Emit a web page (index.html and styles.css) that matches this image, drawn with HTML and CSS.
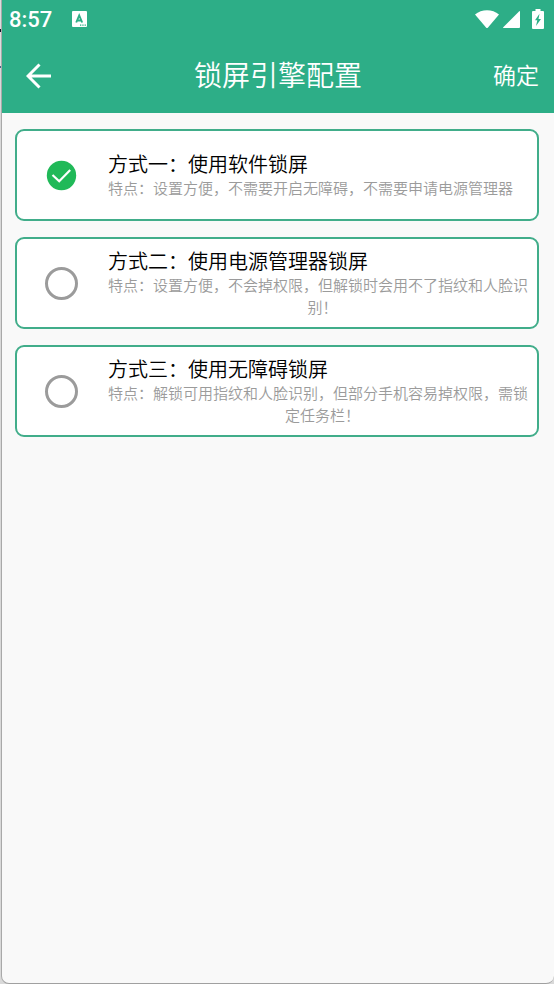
FILE: index.html
```html
<!DOCTYPE html>
<html lang="zh-CN">
<head>
<meta charset="utf-8">
<meta name="viewport" content="width=device-width, initial-scale=1">
<title>锁屏引擎配置</title>
<link rel="stylesheet" href="styles.css">
</head>
<body>
<div class="screen">
  <header class="top">
    <div class="status">
      <span class="clock">8:57</span>
      <svg class="notice" viewBox="0 0 15 16" aria-hidden="true">
        <rect width="15" height="16" rx="1" fill="#fff"/>
        <path d="M4.200 11.500 7.200 4.500l3 7M5.200 9.500h4" fill="none" stroke="#2dae87" stroke-width="1.900"/>
        <path d="M8 14.200h1.300M10.300 14.200h1.300M12.600 14.200h1.300" stroke="#2dae87" stroke-width="1.200"/>
      </svg>
      <span class="signals">
        <svg class="wifi" viewBox="0 0 24 18" aria-hidden="true"><path d="M0 4.500C6.500-1.200 17.500-1.200 24 4.500L13 17.500q-1 1-2 0z" fill="#fff"/></svg>
        <svg class="cell" viewBox="0 0 17 17" aria-hidden="true"><path d="M16 .5q1-1 1 .5v15q0 1-1 1H1q-1.500 0-.5-1z" fill="#fff"/></svg>
        <svg class="battery" viewBox="0 0 12 20" aria-hidden="true"><path d="M3.500 0h5v2H11q1 0 1 1v16q0 1-1 1H1q-1 0-1-1V3q0-1 1-1h2.500z" fill="#fff"/><path d="M7.500 4.800 3 11.200h2.300L4 17l5-7H6.500z" fill="#2dae87"/></svg>
      </span>
    </div>
    <nav class="bar">
      <button class="back" type="button" aria-label="返回">
        <svg viewBox="0 0 26 26" aria-hidden="true"><path d="M25 13H2M13.500 1.500 2 13l11.500 11.500" fill="none" stroke="#fff" stroke-width="3"/></svg>
      </button>
      <h1 class="title">锁屏引擎配置</h1>
      <button class="confirm" type="button">确定</button>
    </nav>
  </header>
  <main class="options">
    <label class="card">
      <input class="radio" type="radio" name="engine" checked>
      <svg class="tick" viewBox="0 0 33 33" aria-hidden="true"><circle cx="16.500" cy="16.500" r="14.700" fill="#20b958"/><path d="M7.500 16l6.700 6.200 11-11.200" fill="none" stroke="#fff" stroke-width="2.200"/></svg>
      <span class="text"><span class="name">方式一：使用软件锁屏</span><span class="desc">特点：设置方便，不需要开启无障碍，不需要申请电源管理器</span></span>
    </label>
    <label class="card">
      <input class="radio" type="radio" name="engine">
      <svg class="tick" viewBox="0 0 33 33" aria-hidden="true"><circle cx="16.500" cy="16.500" r="14.700" fill="#20b958"/><path d="M7.500 16l6.700 6.200 11-11.200" fill="none" stroke="#fff" stroke-width="2.200"/></svg>
      <span class="text"><span class="name">方式二：使用电源管理器锁屏</span><span class="desc">特点：设置方便，不会掉权限，但解锁时会用不了指纹和人脸识别！</span></span>
    </label>
    <label class="card">
      <input class="radio" type="radio" name="engine">
      <svg class="tick" viewBox="0 0 33 33" aria-hidden="true"><circle cx="16.500" cy="16.500" r="14.700" fill="#20b958"/><path d="M7.500 16l6.700 6.200 11-11.200" fill="none" stroke="#fff" stroke-width="2.200"/></svg>
      <span class="text"><span class="name">方式三：使用无障碍锁屏</span><span class="desc">特点：解锁可用指纹和人脸识别，但部分手机容易掉权限，需锁定任务栏！</span></span>
    </label>
  </main>
</div>
</body>
</html>
```
FILE: styles.css
```css
* { box-sizing: border-box; }

body {
  margin: 0;
  padding-left: 1px;
  background: linear-gradient(#ddd 29px, #112 29px, #112 32px, #ddd 32px, #ddd 66px, #468 66px, #468 68px, #d9d9d9 68px);
  font-family: "Noto Sans CJK SC", sans-serif;
  font-weight: 350;
}

.screen {
  min-height: 100vh;
  border-left: 1px solid #a9a9a9;
  border-bottom: 1px solid #a0a0a0;
  border-radius: 0 0 8px 8px;
  background: #f9f9f9;
}

.top {
  background: #2dae87;
  color: #fff;
}

.status {
  display: flex;
  align-items: center;
  height: 38px;
  padding: 0 10px 0 7px;
}

.clock {
  padding-top: 2px;
  font: 500 22px/36px Roboto, sans-serif;
}

.notice {
  width: 15px;
  height: 16px;
  margin-left: 20px;
}

.signals {
  display: flex;
  align-items: center;
  gap: 4px;
  margin-left: auto;
}

.wifi { width: 24px; height: 18px; }
.cell { width: 17px; height: 17px; }
.battery { width: 12px; height: 20px; margin-left: 8px; }

.bar {
  display: grid;
  grid-template-columns: 1fr auto 1fr;
  align-items: center;
  height: 75px;
  padding: 0 15px;
}

.back,
.confirm {
  padding: 0;
  border: 0;
  background: none;
  color: inherit;
  font: inherit;
}

.back {
  justify-self: start;
  height: 26px;
  margin-left: 9px;
}

.back svg {
  display: block;
  width: 26px;
  height: 26px;
}

.title {
  margin: 0;
  padding-bottom: 3px;
  font-size: 28px;
  font-weight: inherit;
  line-height: 40px;
}

.confirm {
  justify-self: end;
  padding-bottom: 3px;
  font-size: 23px;
  line-height: 34px;
}

.options {
  display: flex;
  flex-direction: column;
  gap: 16px;
  padding: 16px 15px 16px 13px;
}

.card {
  display: grid;
  grid-template-columns: 33px 1fr;
  column-gap: 30px;
  align-items: center;
  min-height: 92px;
  padding: 8px 0 8px 28px;
  border: 2px solid #41ad8a;
  border-radius: 9px;
  background: #fff;
}

.radio,
.tick {
  grid-area: 1 / 1;
  width: 33px;
  height: 33px;
  margin: 0;
}

.radio {
  appearance: none;
  border: 3px solid #9b9b9b;
  border-radius: 50%;
}

.tick { display: none; pointer-events: none; }
.radio:checked { opacity: 0; }
.radio:checked + .tick { display: block; }

.text {
  grid-area: 1 / 2;
  display: flex;
  flex-direction: column;
  align-items: flex-start;
}

.name {
  color: #000;
  font-size: 20px;
  line-height: 26px;
}

.desc {
  color: #9b9b9b;
  font-size: 15px;
  line-height: 22px;
  text-align-last: center;
}
```
